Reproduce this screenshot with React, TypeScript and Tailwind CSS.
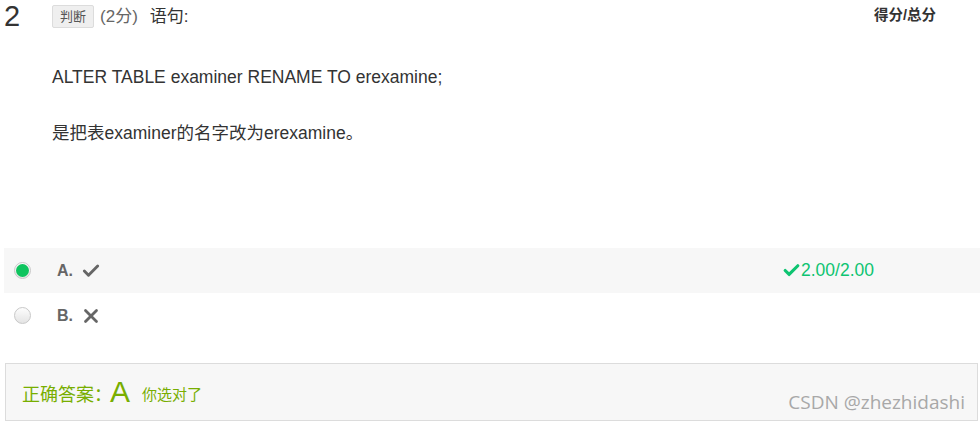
import { Check, X } from 'lucide-react';

const font = "font-['Liberation_Sans','Noto_Sans_CJK_SC',sans-serif]";

const Radio = ({ checked }: { checked?: boolean }) => (
  <div className="w-[17px] h-[17px] rounded-full border border-[#c8c8c8] bg-gradient-to-b from-[#fdfdfd] to-[#e4e4e4] flex items-center justify-center">
    {checked && <div className="w-[13px] h-[13px] rounded-full bg-[#0ec45e]" />}
  </div>
);

const App = () => {
  return (
    <div className={`${font} w-[980px] h-[423px] bg-white text-[#333] overflow-hidden`}>
      {/* Header */}
      <div className="flex items-start h-[40px]">
        <div className="w-[52px] pl-[4px] text-[29px] leading-[32px] text-[#333]">2</div>
        <div className="flex items-center mt-[4px]">
          <span className="px-[7px] h-[23px] leading-[21px] text-[13px] text-[#555] bg-[#efefef] border border-[#dcdcdc] rounded-[2px]">
            判断
          </span>
          <span className="ml-[6px] text-[17px] text-[#666]">(2分)</span>
          <span className="ml-[12px] text-[17px] text-[#333]">语句:</span>
        </div>
        <div className="ml-auto mr-[44px] mt-[5px] text-[14.5px] font-bold text-[#333]">得分/总分</div>
      </div>

      {/* Body */}
      <div className="pl-[52px] pt-[24px] text-[17.5px] leading-[26px] text-[#333]">
        <p>ALTER TABLE examiner RENAME TO erexamine;</p>
        <p className="mt-[30px]">是把表examiner的名字改为erexamine。</p>
      </div>

      {/* Options */}
      <div className="mt-[102px] ml-[4px]">
        <div className="flex items-center h-[45px] bg-[#f7f7f7]">
          <div className="w-[53px] pl-[10px]">
            <Radio checked />
          </div>
          <span className="text-[16px] font-bold text-[#666]">A.</span>
          <Check className="ml-[8px] w-[20px] h-[20px] text-[#666]" strokeWidth={3.5} />
          <div className="ml-auto w-[198px] flex items-center text-[17.5px] text-[#0ec471]">
            <Check className="w-[19px] h-[19px]" strokeWidth={4} />
            <span>2.00/2.00</span>
          </div>
        </div>
        <div className="flex items-center h-[45px]">
          <div className="w-[53px] pl-[10px]">
            <Radio />
          </div>
          <span className="text-[16px] font-bold text-[#666]">B.</span>
          <X className="ml-[7px] w-[22px] h-[22px] text-[#666]" strokeWidth={3} />
        </div>
      </div>

      {/* Answer */}
      <div className="mt-[25px] ml-[5px] mr-[2px] h-[58px] border border-[#dcdcdc] bg-[#f7f7f7] flex items-center pl-[16px]">
        <span className="text-[18px] text-[#78ae00] mt-[6px]">正确答案：</span>
        <span className="-ml-[2px] text-[30px] leading-[34px] text-[#78ae00]">A</span>
        <span className="ml-[12px] text-[15px] text-[#78ae00] mt-[6px]">你选对了</span>
        <span className="ml-auto mr-[12px] mt-[20px] text-[19px] text-[#a8a8a8] font-['Open_Sans','Noto_Sans',sans-serif]">
          CSDN @zhezhidashi
        </span>
      </div>
    </div>
  );
};

export default App;
